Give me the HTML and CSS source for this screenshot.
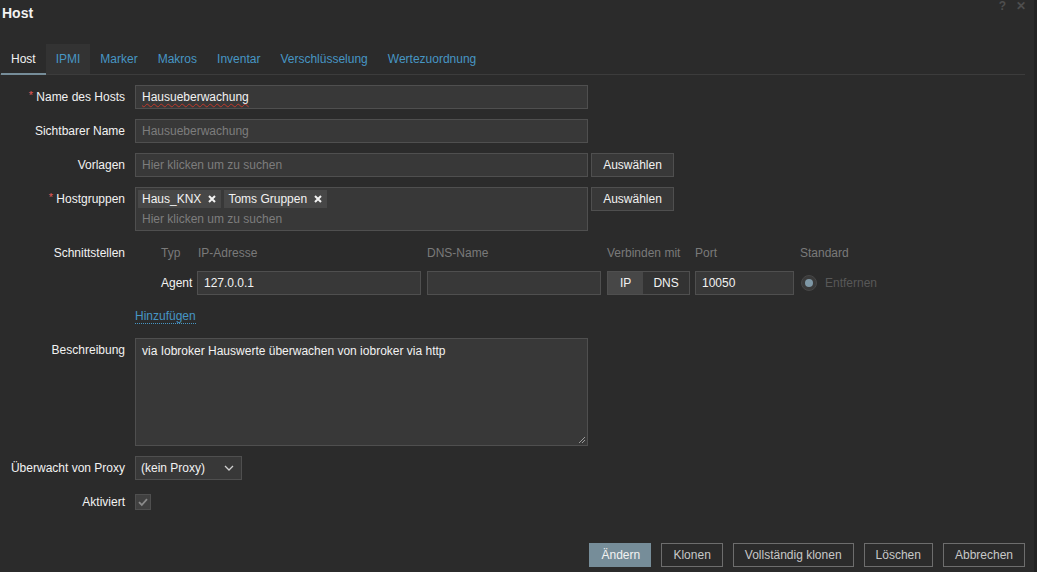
FILE: index.html
```html
<!DOCTYPE html>
<html lang="de">
<head>
<meta charset="utf-8">
<title>Host</title>
<link rel="stylesheet" href="styles.css">
</head>
<body>
<div class="dialog">
  <header class="dlg-head">
    <h1 class="dlg-title">Host</h1>
    <div class="head-icons"><span class="hicon">?</span><span class="hicon close">&#x2715;</span></div>
  </header>

  <nav class="tabs">
    <a class="tab active">Host</a>
    <a class="tab hover">IPMI</a>
    <a class="tab">Marker</a>
    <a class="tab">Makros</a>
    <a class="tab">Inventar</a>
    <a class="tab">Verschlüsselung</a>
    <a class="tab">Wertezuordnung</a>
  </nav>

  <div class="form">
    <div class="row">
      <div class="lbl"><span class="req">*</span> Name des Hosts</div>
      <div class="field w453"><span class="spell">Hausueberwachung</span></div>
    </div>
    <div class="row">
      <div class="lbl">Sichtbarer Name</div>
      <div class="field w453 ph">Hausueberwachung</div>
    </div>
    <div class="row">
      <div class="lbl">Vorlagen</div>
      <div class="field w453 ph">Hier klicken um zu suchen</div>
      <button class="btn-grey">Auswählen</button>
    </div>
    <div class="row">
      <div class="lbl"><span class="req">*</span> Hostgruppen</div>
      <div class="multi w453">
        <div class="tags">
          <span class="tag">Haus_KNX<svg class="tx" viewBox="0 0 8 8" width="8" height="8"><path d="M1 1L7 7M7 1L1 7" stroke="#f2f2f2" stroke-width="2"/></svg></span>
          <span class="tag">Toms Gruppen<svg class="tx" viewBox="0 0 8 8" width="8" height="8"><path d="M1 1L7 7M7 1L1 7" stroke="#f2f2f2" stroke-width="2"/></svg></span>
        </div>
        <div class="multi-ph">Hier klicken um zu suchen</div>
      </div>
      <button class="btn-grey">Auswählen</button>
    </div>

    <div class="row row-if">
      <div class="lbl lbl-if">Schnittstellen</div>
      <div class="if-wrap">
        <div class="if-grid">
          <div></div>
          <div class="ih">Typ</div>
          <div class="ih">IP-Adresse</div>
          <div class="ih">DNS-Name</div>
          <div class="ih">Verbinden mit</div>
          <div class="ih">Port</div>
          <div class="ih">Standard</div>

          <div></div>
          <div class="itype">Agent</div>
          <div><div class="field w224">127.0.0.1</div></div>
          <div><div class="field w174"></div></div>
          <div><div class="toggle"><span class="tg on">IP</span><span class="tg">DNS</span></div></div>
          <div><div class="field w99">10050</div></div>
          <div class="std"><span class="radio"><span class="dot"></span></span><span class="rm">Entfernen</span></div>
        </div>
        <a class="add-link">Hinzufügen</a>
      </div>
    </div>

    <div class="row">
      <div class="lbl">Beschreibung</div>
      <div class="textarea w453">via Iobroker Hauswerte überwachen von iobroker via http
        <svg class="grip" viewBox="0 0 8 8" width="8" height="8"><path d="M7 1L1 7M7 4L4 7" stroke="#9a9a9a" stroke-width="1"/></svg>
      </div>
    </div>
    <div class="row">
      <div class="lbl">Überwacht von Proxy</div>
      <div class="select">(kein Proxy)<svg class="chev" viewBox="0 0 10 6" width="10" height="6"><path d="M1 1L5 5L9 1" fill="none" stroke="#d0d0d0" stroke-width="1.3"/></svg></div>
    </div>
    <div class="row">
      <div class="lbl">Aktiviert</div>
      <div class="cb-wrap"><span class="checkbox"><svg viewBox="0 0 12 12" width="12" height="12"><path d="M2 6.2L4.8 9L10 3.2" fill="none" stroke="#8a8a8a" stroke-width="1.8"/></svg></span></div>
    </div>
  </div>

  <footer class="dlg-foot">
    <button class="btn-main">Ändern</button>
    <button class="btn-alt">Klonen</button>
    <button class="btn-alt">Vollständig klonen</button>
    <button class="btn-alt">Löschen</button>
    <button class="btn-alt">Abbrechen</button>
  </footer>
</div>
</body>
</html>
```

FILE: styles.css
```css
* { box-sizing: border-box; }
html, body {
  margin: 0;
  padding: 0;
  background: #2b2b2b;
  height: 100%;
}
body {
  font-family: "Liberation Sans", Arial, sans-serif;
  font-size: 12px;
  color: #f2f2f2;
  overflow: hidden;
}
.dialog {
  height: 572px;
  display: flex;
  flex-direction: column;
  border-right: 3px solid #232323;
}
.dlg-head {
  display: flex;
  justify-content: space-between;
  align-items: flex-start;
  height: 26px;
  padding-left: 2px;
}
.dlg-title {
  margin: 0;
  font-size: 14px;
  font-weight: bold;
  line-height: 26px;
  color: #f2f2f2;
}
.head-icons {
  display: flex;
  gap: 10px;
  margin-top: 0;
  margin-right: 8px;
}
.hicon {
  color: #4e4e4e;
  font-size: 12px;
  font-weight: bold;
  line-height: 12px;
}

.tabs {
  display: flex;
  margin-top: 18px;
  margin-right: 9px;
  border-bottom: 1px solid #3c3c3c;
  height: 31px;
}
.tab {
  display: block;
  padding: 0 10px;
  line-height: 30px;
  height: 30px;
  color: #4796c4;
  font-size: 12px;
}
.tab:first-child { margin-left: 1px; }
.tab.active {
  color: #f2f2f2;
  border-bottom: 2px solid #768d99;
  line-height: 28px;
  padding-top: 1px;
  height: 31px;
  margin-bottom: -1px;
}
.tab.hover { background: #333333; }

.form {
  padding-top: 10px;
}
.row {
  display: flex;
  align-items: flex-start;
  margin-bottom: 10px;
}
.lbl {
  width: 135px;
  flex: none;
  padding-right: 10px;
  text-align: right;
  line-height: 24px;
  color: #f2f2f2;
}
.req { color: #e45959; font-size: 11px; position: relative; top: -2px; }

.field {
  height: 24px;
  line-height: 22px;
  background: #383838;
  border: 1px solid #4f4f4f;
  padding: 0 6px;
  color: #f2f2f2;
  white-space: nowrap;
  overflow: hidden;
}
.field.ph, .ph { color: #7d7d7d; }
.w453 { width: 453px; }
.w224 { width: 224px; }
.w174 { width: 174px; }
.w99 { width: 99px; }
.spell {
  text-decoration: underline wavy #c0392b;
  text-decoration-thickness: 1px;
  text-underline-offset: 2px;
}

.btn-grey {
  margin-left: 3px;
  height: 24px;
  width: 83px;
  background: #383838;
  border: 1px solid #4f4f4f;
  color: #f2f2f2;
  font-family: inherit;
  font-size: 12px;
  padding: 0;
}

.multi {
  height: 44px;
  background: #383838;
  border: 1px solid #4f4f4f;
  padding: 2px 2px 0 2px;
}
.tags { display: flex; gap: 3px; }
.tag {
  display: inline-flex;
  align-items: center;
  height: 18px;
  background: #474747;
  padding: 0 5px 0 4px;
  color: #f2f2f2;
}
.tx { margin-left: 7px; }
.multi-ph {
  color: #7d7d7d;
  line-height: 16px;
  margin-top: 3px;
  padding-left: 4px;
}

.row-if { margin-top: 13px; margin-bottom: 14px; }
.lbl-if { line-height: 18px; }
.if-wrap { display: flex; flex-direction: column; }
.if-grid {
  display: grid;
  grid-template-columns: 26px 36px 230px 180px 88px 105px auto;
  grid-template-rows: 18px 24px;
  row-gap: 9px;
}
.ih {
  color: #7a7a7a;
  line-height: 18px;
  white-space: nowrap;
}
.ih:nth-child(3) { padding-left: 1px; }
.itype { line-height: 24px; color: #f2f2f2; }
.toggle {
  display: flex;
  width: 83px;
  height: 24px;
  border: 1px solid #4f4f4f;
}
.tg {
  line-height: 22px;
  text-align: center;
  color: #f2f2f2;
  background: #333333;
  width: 47px;
}
.tg.on { background: #474747; width: 36px; }
.std {
  display: flex;
  align-items: center;
  height: 24px;
  padding-left: 1px;
}
.radio {
  width: 16px;
  height: 16px;
  border-radius: 50%;
  background: #3a3a3a;
  border: 1px solid #474747;
  display: flex;
  align-items: center;
  justify-content: center;
}
.dot {
  width: 8px;
  height: 8px;
  border-radius: 50%;
  background: #7f98a6;
}
.rm { color: #585858; margin-left: 8px; }
.add-link {
  align-self: flex-start;
  margin-top: 14px;
  color: #4796c4;
  line-height: 14px;
  border-bottom: 1px dotted #4796c4;
}

.textarea {
  position: relative;
  height: 108px;
  background: #383838;
  border: 1px solid #4f4f4f;
  padding: 5px 6px;
  line-height: 14px;
  color: #f2f2f2;
}
.grip { position: absolute; right: 1px; bottom: 1px; }

.select {
  width: 107px;
  height: 24px;
  line-height: 22px;
  background: #383838;
  border: 1px solid #4f4f4f;
  padding: 0 5px;
  color: #f2f2f2;
  display: flex;
  align-items: center;
  justify-content: space-between;
}
.chev { margin-right: 2px; }
.cb-wrap { height: 24px; display: flex; align-items: center; }
.checkbox {
  width: 16px;
  height: 16px;
  background: #404040;
  border: 1px solid #4f4f4f;
  display: flex;
  align-items: center;
  justify-content: center;
}

.dlg-foot {
  margin-top: auto;
  display: flex;
  justify-content: flex-end;
  gap: 10px;
  padding: 0 9px 5px 0;
}
.dlg-foot button {
  height: 24px;
  font-family: inherit;
  font-size: 12px;
  padding: 0 11px;
}
.btn-main {
  background: #768d99;
  border: 1px solid #768d99;
  color: #f2f2f2;
  width: 62px;
}
.btn-alt {
  background: transparent;
  border: 1px solid #6d6d6d;
  color: #c8c8c8;
}
```
